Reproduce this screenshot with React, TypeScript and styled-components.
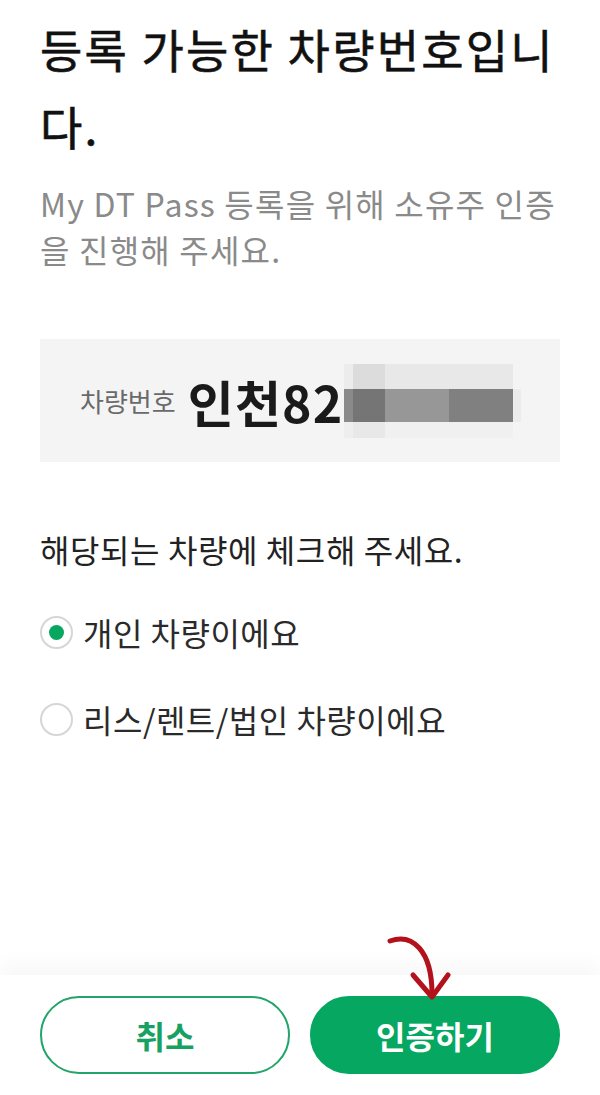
import React, { useState } from "react";
import styled, { createGlobalStyle } from "styled-components";

const GlobalStyle = createGlobalStyle`
  html, body { margin: 0; padding: 0; background: #ffffff; }
  body { font-family: "Noto Sans CJK KR", "Noto Sans", sans-serif; }
  * { box-sizing: border-box; }
`;

const Page = styled.div`
  position: relative;
  min-height: 100vh;
  display: flex;
  flex-direction: column;
  background: #fff;
`;

const Content = styled.main`
  padding: 10px 40px 0;
  display: flex;
  flex-direction: column;
`;

const Title = styled.h1`
  margin: 0;
  font-size: 46px;
  line-height: 77px;
  font-weight: 400;
  -webkit-text-stroke: 0.6px #111;
  letter-spacing: 2.2px;
  color: #111;
`;

const Subtitle = styled.p`
  margin: 16px 0 0;
  font-size: 32px;
  line-height: 46px;
  font-weight: 400;
  color: #8a8a8a;
  letter-spacing: 1.2px;
`;

const PlateBox = styled.div`
  margin-top: 67px;
  height: 123px;
  background: #f4f4f4;
  display: flex;
  align-items: center;
  padding-left: 40px;
`;

const PlateLabel = styled.span`
  font-size: 26px;
  color: #6a6a6a;
  margin-right: 12px;
`;

const PlateNumber = styled.span`
  font-size: 50px;
  font-weight: 700;
  color: #1a1a1a;
  letter-spacing: 1.2px;
`;

const Mosaic = styled.svg`
  display: block;
  flex: none;
`;

const Question = styled.p`
  margin: 64px 0 0;
  font-size: 32px;
  line-height: 46px;
  color: #222;
  letter-spacing: 0.6px;
`;

const Options = styled.div`
  margin-top: 30px;
  display: flex;
  flex-direction: column;
  gap: 27px;
`;

const OptionRow = styled.label`
  display: flex;
  align-items: center;
  height: 60px;
  gap: 10px;
  cursor: pointer;
`;

const RadioCircle = styled.span<{ $checked: boolean }>`
  width: 33px;
  height: 33px;
  border-radius: 50%;
  border: 2px solid #d6d6d6;
  display: flex;
  align-items: center;
  justify-content: center;
  flex: none;
  &::after {
    content: "";
    width: 15px;
    height: 15px;
    border-radius: 50%;
    background: ${(p) => (p.$checked ? "#07a75f" : "transparent")};
  }
`;

const OptionText = styled.span`
  font-size: 32px;
  color: #2a2a2a;
  letter-spacing: 0.5px;
`;

const Footer = styled.footer`
  margin-top: auto;
  height: 120px;
  padding: 21px 40px 21px;
  display: grid;
  grid-template-columns: 1fr 1fr;
  gap: 20px;
  background: #fff;
  box-shadow: 0 -10px 22px rgba(0, 0, 0, 0.035);
`;

const Button = styled.button<{ $primary?: boolean }>`
  height: 78px;
  border-radius: 39px;
  font-family: "Noto Sans CJK KR", "Noto Sans", sans-serif;
  font-size: 32px;
  font-weight: 700;
  border: 2px solid #22a46a;
  background: ${(p) => (p.$primary ? "#06a760" : "#fff")};
  color: ${(p) => (p.$primary ? "#fff" : "#17a163")};
  border-color: ${(p) => (p.$primary ? "#06a760" : "#22a46a")};
  cursor: pointer;
`;

const Arrow = styled.svg`
  position: absolute;
  left: 380px;
  top: 928px;
  pointer-events: none;
`;

const cells: { x: number; y: number; w: number; h: number; c: string }[] = [
  { x: 0, y: 0, w: 9, h: 25, c: "#ececec" },
  { x: 9, y: 0, w: 32, h: 25, c: "#dcdcdc" },
  { x: 41, y: 0, w: 128, h: 25, c: "#e8e8e8" },
  { x: 0, y: 25, w: 9, h: 33, c: "#8a8a8a" },
  { x: 9, y: 25, w: 32, h: 33, c: "#757575" },
  { x: 41, y: 25, w: 64, h: 33, c: "#979797" },
  { x: 105, y: 25, w: 64, h: 33, c: "#808080" },
  { x: 169, y: 25, w: 8, h: 33, c: "#ececec" },
  { x: 0, y: 58, w: 9, h: 16, c: "#eeeeee" },
  { x: 9, y: 58, w: 32, h: 16, c: "#e8e8e8" },
  { x: 41, y: 58, w: 128, h: 16, c: "#f0f0f0" },
];

export default function App() {
  const [choice, setChoice] = useState<"personal" | "lease">("personal");
  return (
    <Page>
      <GlobalStyle />
      <Content>
        <Title>등록 가능한 차량번호입니다.</Title>
        <Subtitle>My DT Pass 등록을 위해 소유주 인증을 진행해 주세요.</Subtitle>
        <PlateBox>
          <PlateLabel>차량번호</PlateLabel>
          <PlateNumber>인천82</PlateNumber>
          <Mosaic width="177" height="74" viewBox="0 0 177 74">
            {cells.map((c, i) => (
              <rect key={i} x={c.x} y={c.y} width={c.w} height={c.h} fill={c.c} />
            ))}
          </Mosaic>
        </PlateBox>
        <Question>해당되는 차량에 체크해 주세요.</Question>
        <Options>
          <OptionRow onClick={() => setChoice("personal")}>
            <RadioCircle $checked={choice === "personal"} />
            <OptionText>개인 차량이에요</OptionText>
          </OptionRow>
          <OptionRow onClick={() => setChoice("lease")}>
            <RadioCircle $checked={choice === "lease"} />
            <OptionText>리스/렌트/법인 차량이에요</OptionText>
          </OptionRow>
        </Options>
      </Content>
      <Footer>
        <Button>취소</Button>
        <Button $primary>인증하기</Button>
      </Footer>
      <Arrow width="80" height="80" viewBox="0 0 80 80">
        <path
          d="M10 13 C 32 5, 52 22, 52 66"
          fill="none"
          stroke="#b3121c"
          strokeWidth="5"
          strokeLinecap="round"
        />
        <path
          d="M33 47 L52 69 L68 47"
          fill="none"
          stroke="#b3121c"
          strokeWidth="5"
          strokeLinecap="round"
          strokeLinejoin="round"
        />
      </Arrow>
    </Page>
  );
}
